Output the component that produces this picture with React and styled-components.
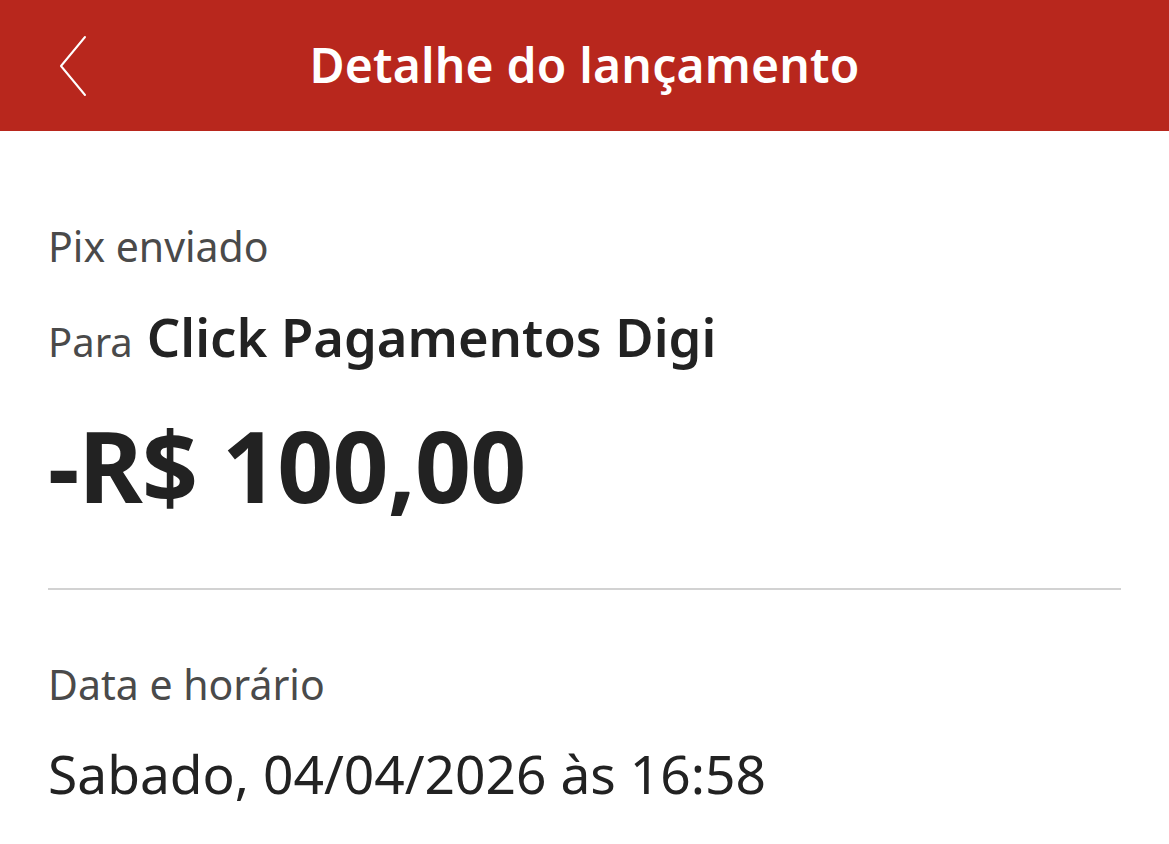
import React from 'react';
import styled, { createGlobalStyle } from 'styled-components';

const GlobalStyle = createGlobalStyle`
  html, body {
    margin: 0;
    padding: 0;
    background: #ffffff;
  }
  body {
    font-family: "Noto Sans", "Open Sans", sans-serif;
    -webkit-font-smoothing: antialiased;
  }
`;

const Page = styled.div`
  width: 100%;
  min-height: 844px;
  background: #ffffff;
`;

const Header = styled.header`
  height: 131px;
  background-color: #b8271d;
  display: flex;
  align-items: center;
  justify-content: center;
  position: relative;
`;

const BackButton = styled.button`
  position: absolute;
  left: 50px;
  top: 28px;
  width: 48px;
  height: 76px;
  padding: 0;
  border: none;
  background: transparent;
  cursor: pointer;
  display: flex;
  align-items: center;
  justify-content: center;
`;

const Title = styled.h1`
  margin: 0;
  color: #ffffff;
  font-size: 48px;
  font-weight: 600;
  letter-spacing: 0.2px;
  line-height: 1;
  padding-bottom: 2px;
`;

const Content = styled.main`
  padding: 0 48px;
`;

const Section = styled.section`
  padding-top: ${(p) => p.$top}px;
  display: flex;
  flex-direction: column;
`;

const Label = styled.p`
  margin: 0;
  font-size: 41px;
  line-height: 48px;
  color: #4a4a4a;
  font-weight: 400;
`;

const Recipient = styled.p`
  margin: 37px 0 0;
  display: flex;
  align-items: baseline;
  gap: 14px;
  line-height: 60px;

  span {
    font-size: 40px;
    color: #4a4a4a;
  }

  strong {
    font-size: 52.5px;
    font-weight: 600;
    color: #222222;
  }
`;

const Amount = styled.p`
  margin: 38px 0 0;
  font-size: 98px;
  line-height: 110px;
  font-weight: 700;
  color: #222222;
  letter-spacing: -0.8px;
`;

const Divider = styled.hr`
  margin: 68px 0 0;
  border: none;
  height: 2px;
  background: #d2d2d2;
`;

const Value = styled.p`
  margin: 35px 0 0;
  font-size: 53.3px;
  line-height: 62px;
  color: #222222;
  font-weight: 400;
`;

const ChevronLeft = () => (
  <svg width="30" height="64" viewBox="0 0 30 64" fill="none">
    <path d="M26 3 L2 32 L26 61" stroke="#ffffff" strokeWidth="2" strokeLinecap="round" strokeLinejoin="round" />
  </svg>
);

export default function App() {
  return (
    <Page>
      <GlobalStyle />
      <Header>
        <BackButton aria-label="Voltar">
          <ChevronLeft />
        </BackButton>
        <Title>Detalhe do lançamento</Title>
      </Header>
      <Content>
        <Section $top={91}>
          <Label>Pix enviado</Label>
          <Recipient>
            <span>Para</span>
            <strong>Click Pagamentos Digi</strong>
          </Recipient>
          <Amount>-R$ 100,00</Amount>
        </Section>
        <Divider />
        <Section $top={70}>
          <Label>Data e horário</Label>
          <Value>Sabado, 04/04/2026 às 16:58</Value>
        </Section>
      </Content>
    </Page>
  );
}
